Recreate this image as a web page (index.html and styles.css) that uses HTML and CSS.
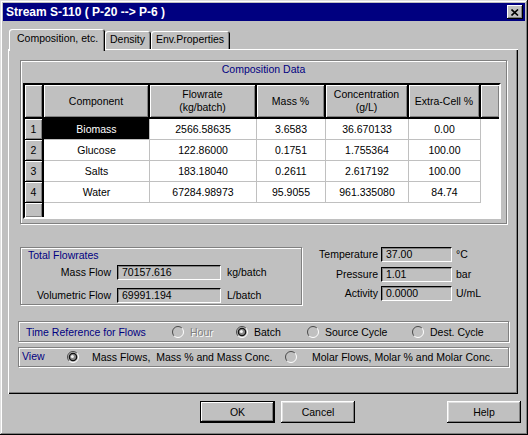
FILE: index.html
```html
<!DOCTYPE html>
<html lang="en">
<head>
    <meta charset="UTF-8">
    <title>Stream S-110</title>
    <link rel="stylesheet" href="styles.css">
</head>
<body>
    <div class="window">
        <div class="titlebar">
            <span class="title">Stream S-110 ( P-20 --&gt; P-6 )</span>
            <span class="close">
                <svg width="8" height="7" viewBox="0 0 8 7"><path d="M0.5 0.5 L7 6.5 M7 0.5 L0.5 6.5" stroke="#000" stroke-width="1.6" fill="none"/></svg>
            </span>
        </div>

        <div class="tabs">
            <div class="tab active">Composition, etc.</div>
            <div class="tab">Density</div>
            <div class="tab">Env.Properties</div>
        </div>

        <div class="panel">
            <!-- Composition grid -->
            <div class="group comp">
                <div class="group-title">Composition Data</div>
                <div class="grid">
                    <div class="row head">
                        <div class="c rh"></div>
                        <div class="c w-comp">Component</div>
                        <div class="c w-flow">Flowrate<br>(kg/batch)</div>
                        <div class="c w-mass">Mass %</div>
                        <div class="c w-conc">Concentration<br>(g/L)</div>
                        <div class="c w-extra">Extra-Cell %</div>
                        <div class="c fill"></div>
                    </div>
                    <div class="row">
                        <div class="c rh">1</div>
                        <div class="c w-comp selected">Biomass</div>
                        <div class="c w-flow">2566.58635</div>
                        <div class="c w-mass">3.6583</div>
                        <div class="c w-conc">36.670133</div>
                        <div class="c w-extra">0.00</div>
                    </div>
                    <div class="row">
                        <div class="c rh">2</div>
                        <div class="c w-comp">Glucose</div>
                        <div class="c w-flow">122.86000</div>
                        <div class="c w-mass">0.1751</div>
                        <div class="c w-conc">1.755364</div>
                        <div class="c w-extra">100.00</div>
                    </div>
                    <div class="row">
                        <div class="c rh">3</div>
                        <div class="c w-comp">Salts</div>
                        <div class="c w-flow">183.18040</div>
                        <div class="c w-mass">0.2611</div>
                        <div class="c w-conc">2.617192</div>
                        <div class="c w-extra">100.00</div>
                    </div>
                    <div class="row">
                        <div class="c rh">4</div>
                        <div class="c w-comp">Water</div>
                        <div class="c w-flow">67284.98973</div>
                        <div class="c w-mass">95.9055</div>
                        <div class="c w-conc">961.335080</div>
                        <div class="c w-extra">84.74</div>
                    </div>
                    <div class="row stub">
                        <div class="c rh"></div>
                    </div>
                </div>
            </div>

            <div class="mid">
                <div class="group totals">
                    <div class="label-navy">Total Flowrates</div>
                    <div class="fields">
                        <span class="lbl">Mass Flow</span>
                        <span class="box">70157.616</span>
                        <span class="unit">kg/batch</span>
                        <span class="lbl">Volumetric Flow</span>
                        <span class="box">69991.194</span>
                        <span class="unit">L/batch</span>
                    </div>
                </div>
                <div class="conditions">
                    <span class="lbl">Temperature</span>
                    <span class="box">37.00</span>
                    <span class="unit">°C</span>
                    <span class="lbl">Pressure</span>
                    <span class="box">1.01</span>
                    <span class="unit">bar</span>
                    <span class="lbl">Activity</span>
                    <span class="box">0.0000</span>
                    <span class="unit">U/mL</span>
                </div>
            </div>

            <!-- Time reference -->
            <div class="group strip time">
                <span class="label-navy time-label">Time Reference for Flows</span>
                <span class="radio r-hour">
                    <svg width="12" height="12" viewBox="0 0 12 12"><circle cx="6" cy="6" r="5.5" fill="#c0c0c0"/><path d="M2.1 9.9 A5.5 5.5 0 0 1 9.9 2.1" stroke="#4a4a4a" fill="none"/><path d="M9.9 2.1 A5.5 5.5 0 0 1 2.1 9.9" stroke="#fff" fill="none"/></svg>
                    <span class="disabled">Hour</span>
                </span>
                <span class="radio r-batch">
                    <svg width="12" height="12" viewBox="0 0 12 12"><circle cx="6" cy="6" r="5.5" fill="#c0c0c0"/><path d="M2.1 9.9 A5.5 5.5 0 0 1 9.9 2.1" stroke="#4a4a4a" fill="none"/><path d="M9.9 2.1 A5.5 5.5 0 0 1 2.1 9.9" stroke="#fff" fill="none"/><circle cx="6" cy="6" r="4.3" fill="#101010"/><circle cx="6" cy="6" r="3" fill="#8c8c8c"/><circle cx="5.4" cy="5.4" r="1.5" fill="#f4f4f4"/></svg>
                    <span>Batch</span>
                </span>
                <span class="radio r-source">
                    <svg width="12" height="12" viewBox="0 0 12 12"><circle cx="6" cy="6" r="5.5" fill="#c0c0c0"/><path d="M2.1 9.9 A5.5 5.5 0 0 1 9.9 2.1" stroke="#4a4a4a" fill="none"/><path d="M9.9 2.1 A5.5 5.5 0 0 1 2.1 9.9" stroke="#fff" fill="none"/></svg>
                    <span>Source Cycle</span>
                </span>
                <span class="radio">
                    <svg width="12" height="12" viewBox="0 0 12 12"><circle cx="6" cy="6" r="5.5" fill="#c0c0c0"/><path d="M2.1 9.9 A5.5 5.5 0 0 1 9.9 2.1" stroke="#4a4a4a" fill="none"/><path d="M9.9 2.1 A5.5 5.5 0 0 1 2.1 9.9" stroke="#fff" fill="none"/></svg>
                    <span>Dest. Cycle</span>
                </span>
            </div>

            <!-- View -->
            <div class="group strip view">
                <span class="label-navy view-label">View</span>
                <span class="radio r-mass">
                    <svg width="12" height="12" viewBox="0 0 12 12"><circle cx="6" cy="6" r="5.5" fill="#c0c0c0"/><path d="M2.1 9.9 A5.5 5.5 0 0 1 9.9 2.1" stroke="#4a4a4a" fill="none"/><path d="M9.9 2.1 A5.5 5.5 0 0 1 2.1 9.9" stroke="#fff" fill="none"/><circle cx="6" cy="6" r="4.3" fill="#101010"/><circle cx="6" cy="6" r="3" fill="#8c8c8c"/><circle cx="5.4" cy="5.4" r="1.5" fill="#f4f4f4"/></svg>
                    <span>Mass Flows,&nbsp; Mass % and Mass Conc.</span>
                </span>
                <span class="radio r-molar">
                    <svg width="12" height="12" viewBox="0 0 12 12"><circle cx="6" cy="6" r="5.5" fill="#c0c0c0"/><path d="M2.1 9.9 A5.5 5.5 0 0 1 9.9 2.1" stroke="#4a4a4a" fill="none"/><path d="M9.9 2.1 A5.5 5.5 0 0 1 2.1 9.9" stroke="#fff" fill="none"/></svg>
                    <span>Molar Flows, Molar % and Molar Conc.</span>
                </span>
            </div>
        </div>

        <div class="buttons">
            <button class="btn default">OK</button>
            <button class="btn">Cancel</button>
            <button class="btn help">Help</button>
        </div>
    </div>
</body>
</html>
```

FILE: styles.css
```css
* {
    box-sizing: border-box;
}

body {
    margin: 0;
    background-color: #c0c0c0;
    font-family: "Liberation Sans", Arial, sans-serif;
    font-size: 10.5px;
    color: #000;
}

.window {
    width: 528px;
    height: 435px;
    padding: 3px;
    background-color: #c0c0c0;
    box-shadow: inset -1px -1px #000, inset 1px 1px #dfdfdf, inset -2px -2px #808080, inset 2px 2px #fff;
}

/* Title bar */
.titlebar {
    height: 18px;
    background-color: #000080;
    color: #fff;
    display: flex;
    align-items: center;
    justify-content: space-between;
    padding: 0 2px 0 3px;
}

.title {
    font-weight: bold;
    font-size: 12px;
}

.close {
    width: 16px;
    height: 14px;
    background-color: #c0c0c0;
    display: flex;
    align-items: center;
    justify-content: center;
    padding-right: 1px;
    box-shadow: inset -1px -1px #000, inset 1px 1px #fff, inset -2px -2px #808080;
}

/* Tabs */
.tabs {
    display: flex;
    align-items: flex-end;
    height: 20px;
    margin: 8px 0 0 6px;
    position: relative;
    z-index: 1;
}

.tab {
    height: 18px;
    line-height: 17px;
    padding: 0 6px 0 5px;
    white-space: nowrap;
    background-color: #c0c0c0;
    border-radius: 3px 3px 0 0;
    box-shadow: inset 1px 1px #fff, inset -1px 0 #000, inset -2px 0 #808080;
}

.tab.active {
    height: 22px;
    margin-bottom: -2px;
    line-height: 19px;
    padding: 0 6px 0 8px;
    width: 96px;
}

/* Tab page */
.panel {
    margin-left: 5px;
    width: 510px;
    height: 345px;
    padding: 11px 0 0 12px;
    box-shadow: inset 1px 1px #fff, inset -1px -1px #000, inset -2px -2px #808080;
}

.group {
    border: 1px solid #808080;
    box-shadow: inset 1px 1px #fff, 1px 1px #fff;
}

.label-navy {
    color: #000080;
}

.comp {
    width: 487px;
    height: 164px;
    padding: 2px 2px 0 2px;
}

.group-title {
    color: #000080;
    text-align: center;
    line-height: 13px;
    margin-bottom: 7px;
}

/* Composition grid */
.grid {
    width: 478px;
    height: 136px;
    background-color: #fff;
    border: 2px solid;
    border-color: #000 #fff #fff #000;
}

.row {
    display: flex;
    height: 21px;
}

.c {
    height: 21px;
    line-height: 20px;
    text-align: center;
    border-right: 1px solid #c0c0c0;
    border-bottom: 1px solid #c0c0c0;
    white-space: nowrap;
}

.rh {
    width: 19px;
    background-color: #c0c0c0;
    border-right: 2px solid #000;
    border-bottom: 1px solid #000;
    box-shadow: inset 1px 1px #fff, inset -1px -1px #808080;
}

.w-comp { width: 106px; }
.w-flow { width: 107px; }
.w-mass { width: 69px; }
.w-conc { width: 83px; }
.w-extra { width: 72px; }

.selected {
    background-color: #000;
    color: #fff;
}

.row.head {
    height: 34px;
    border-bottom: 2px solid #000;
}

.row.head .c {
    height: 32px;
    line-height: 13px;
    display: flex;
    align-items: center;
    justify-content: center;
    background-color: #c0c0c0;
    border-right: 2px solid #000;
    border-bottom: none;
    box-shadow: inset 1px 1px #fff, inset -1px -1px #808080;
}

.row.head .fill {
    flex: 1;
    border-right: none;
}

.row.stub {
    height: 14px;
}

.row.stub .rh {
    height: 14px;
    border-bottom: none;
}

/* Totals and conditions */
.mid {
    display: flex;
    margin-top: 23px;
    height: 58px;
}

.totals {
    width: 282px;
    height: 58px;
    padding: 1px 0 0 7px;
}

.totals .label-navy {
    line-height: 13px;
}

.fields {
    display: grid;
    grid-template-columns: 83px 104px auto;
    column-gap: 6px;
    row-gap: 8px;
    margin-top: 3px;
}

.lbl {
    text-align: right;
    line-height: 15px;
}

.box {
    height: 15px;
    line-height: 13px;
    padding-left: 4px;
    border: 1px solid;
    border-color: #000 #fff #fff #000;
    box-shadow: inset 1px 1px #808080;
}

.unit {
    line-height: 15px;
}

.conditions {
    display: grid;
    grid-template-columns: 76px 71px auto;
    grid-auto-rows: 15px;
    column-gap: 3px;
    row-gap: 4.5px;
}

.conditions .unit {
    margin-left: 1px;
}

/* Radio strips */
.strip {
    display: flex;
    align-items: center;
    width: 491px;
    margin-left: -2px;
}

.time {
    height: 21px;
    margin-top: 16px;
    padding-left: 7px;
}

.view {
    height: 20px;
    margin-top: 5px;
    padding-left: 3px;
}

.radio {
    display: flex;
    align-items: center;
    gap: 6px;
}

.radio svg {
    display: block;
}

.time-label { width: 146px; }
.r-hour { width: 64px; }
.r-batch { width: 71px; }
.r-source { width: 105px; }

.disabled {
    color: #808080;
    text-shadow: 1px 1px #fff;
}

.view-label {
    width: 45px;
    align-self: flex-start;
    margin-top: 2px;
}

.r-mass {
    width: 218px;
    gap: 13px;
}

.r-molar {
    gap: 15px;
}

/* Buttons */
.buttons {
    display: flex;
    margin-top: 7px;
    padding: 0 4px 0 197px;
    gap: 6px;
}

.btn {
    width: 74px;
    height: 22px;
    padding: 0;
    border: none;
    background-color: #c0c0c0;
    font-family: inherit;
    font-size: inherit;
    color: #000;
    box-shadow: inset -1px -1px #000, inset 1px 1px #fff, inset -2px -2px #808080, inset 2px 2px #dfdfdf;
}

.btn.default {
    width: 75px;
    border: 1px solid #000;
    box-shadow: inset -1px -1px #000, inset 1px 1px #fff, inset -2px -2px #808080;
}

.btn.help {
    margin-left: auto;
}
```
